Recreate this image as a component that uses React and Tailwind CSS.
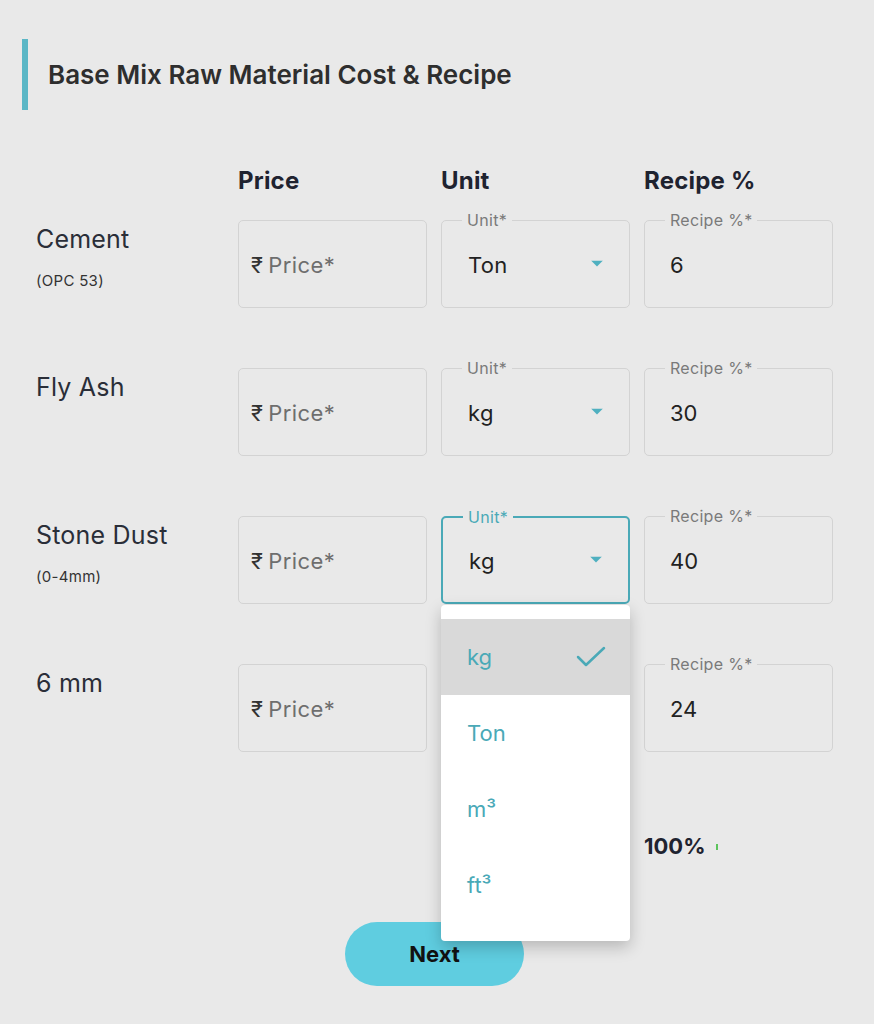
import { useState } from 'react';

const rows = [
  { name: 'Cement', sub: '(OPC 53)', unit: 'Ton', recipe: '6' },
  { name: 'Fly Ash', sub: null, unit: 'kg', recipe: '30' },
  { name: 'Stone Dust', sub: '(0-4mm)', unit: 'kg', recipe: '40', open: true },
  { name: '6 mm', sub: null, unit: 'kg', recipe: '24', hidden: true },
];

const options = ['kg', 'Ton', 'm³', 'ft³'];

const Arrow = () => (
  <svg width="12" height="7" viewBox="0 0 12 7" className="absolute right-[26px] top-1/2 -translate-y-1/2">
    <path d="M0 0 L12 0 L6 6 Z" fill="#4fb0c0" />
  </svg>
);

const UnitSelect = ({ value, open }) => (
  <div className="relative">
    <div
      className={`relative h-[88px] rounded-[5px] flex items-center pl-[26px] pt-[2px] ${
        open ? 'border-2 border-[#4aa9b7]' : 'border border-[#d3d3d3]'
      }`}
    >
      <span
        className={`absolute -top-[11px] left-[20px] px-[5px] bg-[#e9e9e9] text-[16px] leading-[20px] tracking-[0.3px] ${
          open ? 'text-[#4aa9b7]' : 'text-[#7a7a7a]'
        }`}
      >
        Unit*
      </span>
      <span className="text-[22px] text-[#222] tracking-[0.3px]">{value}</span>
      <Arrow />
    </div>
    {open && (
      <div className="absolute left-0 right-0 top-full mt-[1px] z-10 bg-white rounded-[4px] shadow-[0_6px_16px_rgba(0,0,0,0.22)] pt-[14px] pb-[18px]">
        {options.map((opt) => (
          <div
            key={opt}
            className={`h-[76px] flex items-center justify-between pl-[26px] pr-[24px] text-[22px] text-[#4aa9b7] ${
              opt === value ? 'bg-[#d9d9d9]' : ''
            }`}
          >
            <span>{opt}</span>
            {opt === value && (
              <svg width="30" height="22" viewBox="0 0 30 22" fill="none">
                <path d="M2 11 L10 19 L28 2" stroke="#4aa9b7" strokeWidth="2.5" strokeLinecap="round" strokeLinejoin="round" />
              </svg>
            )}
          </div>
        ))}
      </div>
    )}
  </div>
);

const App = () => {
  const [selected] = useState('kg');

  return (
    <div className="min-h-screen bg-[#e9e9e9] font-['Inter',sans-serif] pt-[39px] pb-[38px]">
      {/* Section title */}
      <div className="ml-[22px] border-l-[6px] border-[#5bb7c6] h-[71px] flex items-center pl-[20px]">
        <h1 className="text-[26px] font-semibold text-[#2e2e2e]">
          Base Mix Raw Material Cost &amp; Recipe
        </h1>
      </div>

      <div className="pl-[36px] mt-[56px]">
        {/* Column headers */}
        <div className="grid grid-cols-[188px_189px_189px_189px] gap-x-[14px] text-[24px] font-bold text-[#1f2330] leading-[30px] tracking-[0.2px]">
          <div></div>
          <div>Price</div>
          <div>Unit</div>
          <div>Recipe %</div>
        </div>

        <div className="mt-[24px] flex flex-col gap-[60px]">
          {rows.map((row) => (
            <div key={row.name} className="grid grid-cols-[188px_189px_189px_189px] gap-x-[14px]">
              <div className="pt-[4px]">
                <div className="text-[25px] leading-[30px] text-[#2a2e38] tracking-[0.2px]">{row.name}</div>
                {row.sub && <div className="mt-[18px] text-[15px] leading-[18px] text-[#333] tracking-[0.3px]">{row.sub}</div>}
              </div>
              <div className="h-[88px] border border-[#d3d3d3] rounded-[5px] flex items-center pl-[12px] pt-[3px] text-[22px] tracking-[0.4px]">
                <span className="text-[#333] mr-[5px]">₹</span>
                <span className="text-[#6e6e6e]">Price*</span>
              </div>
              {row.hidden ? (
                <div></div>
              ) : (
                <UnitSelect value={row.open ? selected : row.unit} open={row.open} />
              )}
              <div className="relative h-[88px] border border-[#d3d3d3] rounded-[5px] flex items-center pl-[25px] pt-[2px]">
                <span className="absolute -top-[11px] left-[20px] px-[5px] bg-[#e9e9e9] text-[16px] leading-[20px] text-[#7a7a7a] tracking-[0.3px]">
                  Recipe %*
                </span>
                <span className="text-[22px] text-[#222]">{row.recipe}</span>
              </div>
            </div>
          ))}
        </div>

        {/* Total */}
        <div className="grid grid-cols-[188px_189px_189px_189px] gap-x-[14px] mt-[78px]">
          <div></div>
          <div></div>
          <div></div>
          <div className="flex items-center gap-[10px]">
            <span className="text-[22px] font-bold text-[#1f2330]">100%</span>
            <span className="w-[2px] h-[6px] bg-[#5cc45c] mt-[1px]"></span>
          </div>
        </div>
      </div>

      <div className="mt-[59px] ml-[345px]">
        <button className="w-[179px] h-[64px] rounded-full bg-[#5fcde0] text-[22px] font-bold text-[#111]">
          Next
        </button>
      </div>
    </div>
  );
};

export default App;
